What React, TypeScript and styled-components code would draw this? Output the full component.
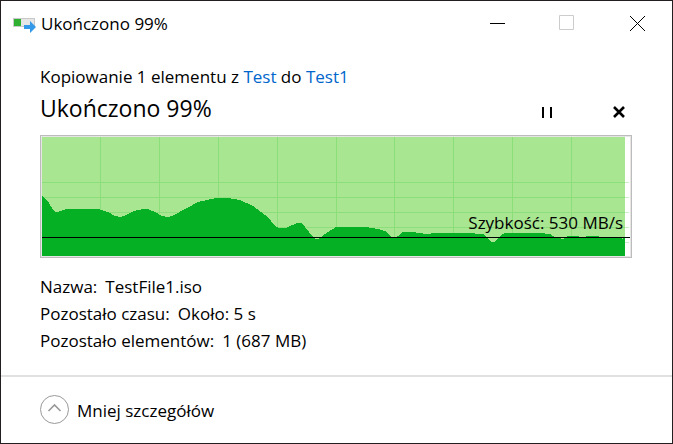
import React from "react";
import styled, { createGlobalStyle } from "styled-components";

const GlobalStyle = createGlobalStyle`
  * { box-sizing: border-box; }
  body { margin: 0; background: #fff; }
  button { padding: 0; border: 0; background: none; color: inherit; font: inherit; cursor: pointer; }
  svg { display: block; }
`;

const Dialog = styled.main`
  display: flex;
  flex-direction: column;
  min-height: 100vh;
  border: 1px solid #231f20;
  background: #fff;
  color: #000;
  font-family: "Segoe UI", "Open Sans", "Noto Sans", sans-serif;
  font-size: 17px;
  line-height: 27px;
`;

const TitleBar = styled.header`
  display: flex;
  align-items: center;
  height: 44px;
  padding-left: 12px;
`;

const Title = styled.h1`
  flex: 1;
  margin: 0 0 0 4px;
  font-size: 17px;
  font-weight: 400;
`;

const WindowButton = styled.button`
  display: grid;
  place-items: center;
  width: 70px;
  height: 44px;
  color: #000;
  &:disabled { color: #ccc; cursor: default; }
`;

const Content = styled.section`
  flex: 1;
  padding: 18px 40px 0 39px;
`;

const Summary = styled.p`
  margin: 0;
`;

const FolderLink = styled.a`
  color: #0066cc;
  text-decoration: none;
`;

const ProgressRow = styled.div`
  display: flex;
  align-items: flex-end;
  height: 36px;
  margin-bottom: 9px;
`;

const ProgressTitle = styled.h2`
  flex: 1;
  margin: 0;
  font-size: 23px;
  font-weight: 400;
  line-height: 36px;
`;

const Actions = styled.div`
  display: flex;
  gap: 48px;
  padding-right: 1px;
`;

const ActionButton = styled.button`
  display: grid;
  place-items: center;
  width: 24px;
  height: 28px;
`;

const Chart = styled.figure`
  position: relative;
  margin: 0;
  border: 1px solid #bcbcbc;
  padding: 1px;
  background: #e6e6e6;
`;

const Plot = styled.svg`
  width: 100%;
  height: 119px;
  background: #fff;
`;

const Speed = styled.figcaption`
  position: absolute;
  right: 8px;
  bottom: 21px;
`;

const Details = styled.dl`
  margin: 15px 0 0;
`;

const DetailRow = styled.div`
  display: flex;
  gap: 8px;
`;

const Term = styled.dt``;

const Value = styled.dd`
  margin: 0;
`;

const Footer = styled.footer`
  display: flex;
  align-items: center;
  height: 68px;
  padding-left: 39px;
  border-top: 2px solid #e1e1e1;
`;

const DetailsToggle = styled.button`
  display: flex;
  align-items: center;
  gap: 8px;
`;

const columns = [58, 117, 176, 235, 294, 352, 411, 470, 529];
const rows = [45, 60, 75, 90, 105];

const speedCurve =
  "M0 119V59L4 62L7 66L10 71L13 75H16L24 72H56L68 76L73 79L78 80L82 79L92 74L101 72H106L113 75L120 79L126 80L132 78L145 71L156 65L165 63L174 61H186L198 63L211 69L223 78L229 84L233 89L237 91H244L255 86H260L270 99L273 102H276L286 95L294 90H324L336 92L343 94L348 99L352 101L356 99L360 95H370L384 97L394 96H424L442 97L445 101L450 105H453L459 98L463 96H498L508 97L513 100L521 102L526 99H534L539 100L548 99H554L559 100H578L580 102L583 100V119Z";

function CopyIcon() {
  return (
    <svg width="24" height="20" viewBox="0 0 24 20" aria-hidden="true">
      <rect x=".5" y="5.5" width="21" height="8" fill="#e6e6e6" stroke="#c8c8c8" />
      <rect x="1" y="6" width="7" height="7" fill="#30b030" />
      <path d="M11 12h6V8l6 6-6 6v-4h-6z" fill="#3399e8" />
    </svg>
  );
}

function SpeedChart() {
  return (
    <Chart>
      <Plot viewBox="0 0 588 119" preserveAspectRatio="none" aria-hidden="true" shapeRendering="crispEdges">
        {rows.map((y) => <rect key={y} x="583" y={y} width="4" height="1" fill="#ccefc9" />)}
        <rect width="583" height="119" fill="#a8e691" />
        {columns.map((x) => <rect key={x} x={x} width="1" height="119" fill="#8cde7b" />)}
        {rows.map((y) => <rect key={y} y={y} width="583" height="1" fill="#8cde7b" />)}
        <path d={speedCurve} fill="#06b025" />
        <rect y="100" width="588" height="1" fill="#000" />
      </Plot>
      <Speed>Szybkość: 530 MB/s</Speed>
    </Chart>
  );
}

const details = [
  { label: "Nazwa:", value: "TestFile1.iso" },
  { label: "Pozostało czasu:", value: "Około: 5 s" },
  { label: "Pozostało elementów:", value: "1 (687 MB)" },
];

export default function App() {
  return (
    <>
      <GlobalStyle />
      <Dialog>
        <TitleBar>
          <CopyIcon />
          <Title>Ukończono 99%</Title>
          <WindowButton type="button" aria-label="Minimalizuj">
            <svg width="15" height="15" viewBox="0 0 15 15"><path d="M0 7.5h15" stroke="currentColor" /></svg>
          </WindowButton>
          <WindowButton type="button" aria-label="Maksymalizuj" disabled>
            <svg width="16" height="16" viewBox="0 0 16 16"><path d="M.5.5h14v14H.5z" fill="none" stroke="currentColor" /></svg>
          </WindowButton>
          <WindowButton type="button" aria-label="Zamknij">
            <svg width="15" height="15" viewBox="0 0 15 15"><path d="m0 0 15 15M15 0 0 15" stroke="currentColor" strokeWidth="1" /></svg>
          </WindowButton>
        </TitleBar>
        <Content>
          <Summary>
            Kopiowanie 1 elementu z <FolderLink href="#test">Test</FolderLink> do{" "}
            <FolderLink href="#test1">Test1</FolderLink>
          </Summary>
          <ProgressRow>
            <ProgressTitle>Ukończono 99%</ProgressTitle>
            <Actions>
              <ActionButton type="button" aria-label="Wstrzymaj">
                <svg width="10" height="11" viewBox="0 0 10 11"><path d="M0 0h2v11H0zM8 0h2v11H8z" /></svg>
              </ActionButton>
              <ActionButton type="button" aria-label="Anuluj">
                <svg width="12" height="12" viewBox="0 0 12 12"><path d="m1 1 10 10M11 1 1 11" stroke="#000" strokeWidth="2.6" /></svg>
              </ActionButton>
            </Actions>
          </ProgressRow>
          <SpeedChart />
          <Details>
            {details.map(({ label, value }) => (
              <DetailRow key={label}>
                <Term>{label}</Term>
                <Value>{value}</Value>
              </DetailRow>
            ))}
          </Details>
        </Content>
        <Footer>
          <DetailsToggle type="button" aria-expanded="true">
            <svg width="29" height="31" viewBox="0 0 29 31" fill="none" aria-hidden="true">
              <circle cx="14.5" cy="14.5" r="14" stroke="#999" />
              <path d="m8.5 16 6-6 6 6" stroke="#999" strokeWidth="1.6" />
            </svg>
            Mniej szczegółów
          </DetailsToggle>
        </Footer>
      </Dialog>
    </>
  );
}
